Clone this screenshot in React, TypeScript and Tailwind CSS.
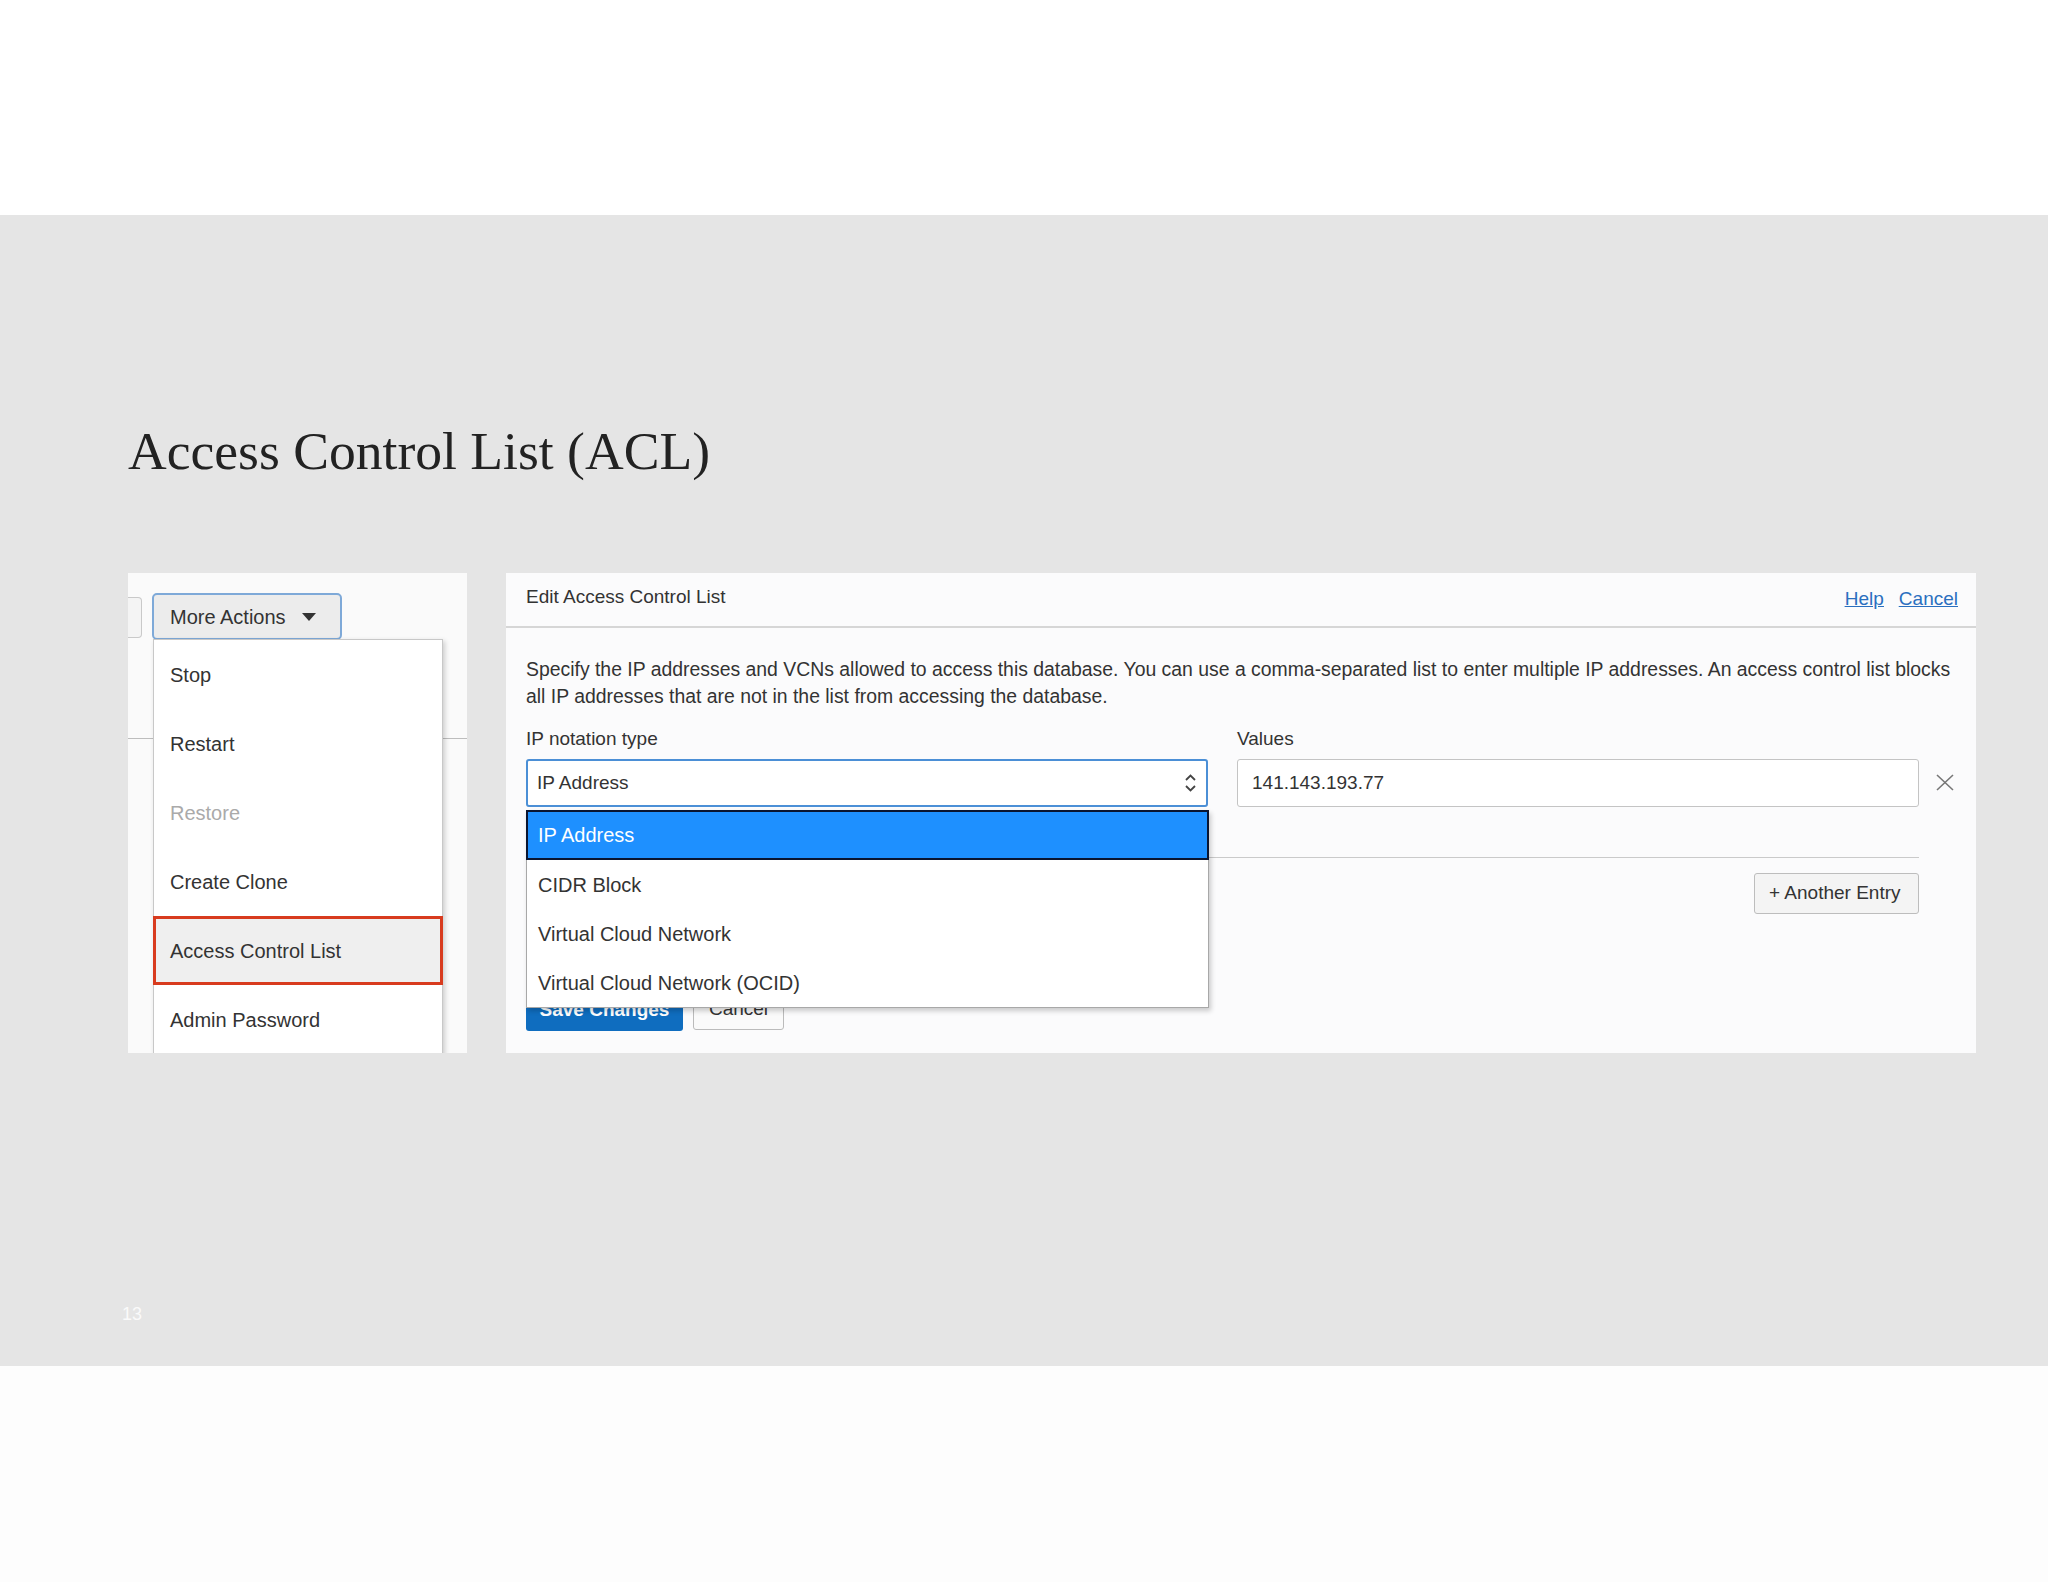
import React from "react";

const menuItems = [
  { label: "Stop" },
  { label: "Restart" },
  { label: "Restore", disabled: true },
  { label: "Create Clone" },
  { label: "Access Control List", active: true },
  { label: "Admin Password" },
];

const notationOptions = [
  "IP Address",
  "CIDR Block",
  "Virtual Cloud Network",
  "Virtual Cloud Network (OCID)",
];

function CaretDown() {
  return (
    <svg width="14" height="8" viewBox="0 0 14 8" className="ml-[16px]">
      <path d="M0 0 L14 0 L7 8 Z" fill="#333" />
    </svg>
  );
}

function UpDownChevron() {
  return (
    <svg width="13" height="20" viewBox="0 0 13 20" fill="none">
      <path d="M2 7 L6.5 2.5 L11 7" stroke="#444" strokeWidth="1.8" />
      <path d="M2 13 L6.5 17.5 L11 13" stroke="#444" strokeWidth="1.8" />
    </svg>
  );
}

function ActionsPanel() {
  return (
    <div className="relative h-[480px] w-[339px] overflow-hidden bg-[#fafafa] text-[20px] text-[#333]">
      <div className="flex items-start pt-[20px]">
        <div className="mt-[4px] h-[41px] w-[14px] rounded-r-[4px] border border-l-0 border-[#c9c9c9] bg-[#f4f4f4]" />
        <button className="ml-[10px] flex h-[47px] w-[190px] items-center rounded-[5px] border-2 border-[#7ea9d8] bg-[#ececec] pl-[16px] text-[#333]">
          More Actions
          <CaretDown />
        </button>
      </div>
      <div className="mt-[98px] border-b border-[#bdbdbd]" />

      {/* open dropdown menu */}
      <div className="absolute left-[25px] top-[66px] h-[440px] w-[290px] border border-[#c8c8c8] bg-white shadow-[2px_2px_5px_rgba(0,0,0,0.18)]">
        {menuItems.map((item) => (
          <div
            key={item.label}
            className={
              item.active
                ? "-mx-px flex h-[69px] items-center border-[3px] border-[#d83b1e] bg-[#efefef] pl-[14px]"
                : "flex h-[69px] items-center pl-[16px]"
            }
          >
            <span className={item.disabled ? "text-[#aaaaaa]" : "text-[#333]"}>
              {item.label}
            </span>
          </div>
        ))}
      </div>
    </div>
  );
}

function EditPanel() {
  return (
    <div className="relative h-[480px] w-[1470px] bg-[#fbfbfc] text-[19px] text-[#333]">
      <div className="flex h-[55px] items-center justify-between border-b-2 border-[#d6d6d6] pl-[20px] pr-[18px]">
        <span className="pb-[4px]">Edit Access Control List</span>
        <div className="flex gap-[15px] text-[#2a6fbf] underline">
          <a href="#">Help</a>
          <a href="#">Cancel</a>
        </div>
      </div>

      <div className="flex flex-col px-[20px] pt-[28px]">
        <p className="whitespace-nowrap text-[19.4px] leading-[27px]">
          Specify the IP addresses and VCNs allowed to access this database. You can use a comma-separated list to enter multiple IP addresses. An access control list blocks
          <br />
          all IP addresses that are not in the list from accessing the database.
        </p>

        <div className="mt-[18px] flex items-start">
          <div className="flex w-[682px] flex-col">
            <span className="leading-[22px]">IP notation type</span>
            <div className="mt-[9px] flex h-[48px] items-center justify-between rounded-[3px] border-2 border-[#4b8fd6] bg-white pl-[9px] pr-[9px]">
              <span>IP Address</span>
              <UpDownChevron />
            </div>
          </div>
          <div className="ml-[29px] flex w-[682px] flex-col">
            <span className="leading-[22px]">Values</span>
            <div className="mt-[9px] flex h-[48px] items-center rounded-[3px] border border-[#c4c4c4] bg-white pl-[14px]">
              141.143.193.77
            </div>
          </div>
          <svg width="18" height="17" viewBox="0 0 18 17" className="ml-[17px] mt-[46px]">
            <path d="M1 1 L17 16 M17 1 L1 16" stroke="#777" strokeWidth="1.6" />
          </svg>
        </div>

        <div className="mt-[50px] w-[1393px] border-t border-[#cacaca]" />
        <div className="flex w-[1393px] justify-end">
          <button className="mt-[15px] flex h-[41px] w-[165px] items-center rounded-[3px] border border-[#bdbdbd] bg-[#f4f4f4] pl-[14px] text-[#333]">
            + Another Entry
          </button>
        </div>

        <div className="mt-[75px] flex items-start">
          <button className="flex h-[42px] w-[157px] items-center justify-center rounded-[3px] bg-[#0f6dbf] font-semibold text-white">
            Save Changes
          </button>
          <button className="ml-[10px] flex h-[41px] w-[91px] items-center justify-center rounded-[3px] border border-[#bbbbbb] bg-[#fafafa] text-[#333]">
            Cancel
          </button>
        </div>
      </div>

      {/* open select list */}
      <div className="absolute left-[20px] top-[237px] w-[683px] border border-t-0 border-[#a8a8a8] bg-white text-[20px] shadow-[2px_3px_5px_rgba(0,0,0,0.2)]">
        {notationOptions.map((opt, i) =>
          i === 0 ? (
            <div
              key={opt}
              className="-mx-px flex h-[50px] items-center border-2 border-[#0a1530] bg-[#1e90ff] pl-[10px] text-white"
            >
              {opt}
            </div>
          ) : (
            <div key={opt} className="flex h-[49px] items-center pl-[11px] text-[#333]">
              {opt}
            </div>
          ),
        )}
      </div>
    </div>
  );
}

export default function App() {
  return (
    <div className="flex h-[1582px] w-[2048px] flex-col bg-white font-['Liberation_Sans',Arial,sans-serif]">
      <div className="h-[215px] bg-white" />
      <section className="flex h-[1151px] flex-col bg-[#e5e5e5] pl-[128px] pt-[209px]">
        <h1 className="font-['Liberation_Serif','Times_New_Roman',serif] text-[53.6px] leading-[54px] text-[#222]">
          Access Control List (ACL)
        </h1>
        <div className="mt-[95px] flex gap-[39px]">
          <ActionsPanel />
          <EditPanel />
        </div>
        <div className="-ml-[6px] mt-[251px] text-[18px] leading-[20px] text-[#fafafa]">13</div>
      </section>
      <div className="flex-1 bg-[#fdfdfd]" />
    </div>
  );
}
